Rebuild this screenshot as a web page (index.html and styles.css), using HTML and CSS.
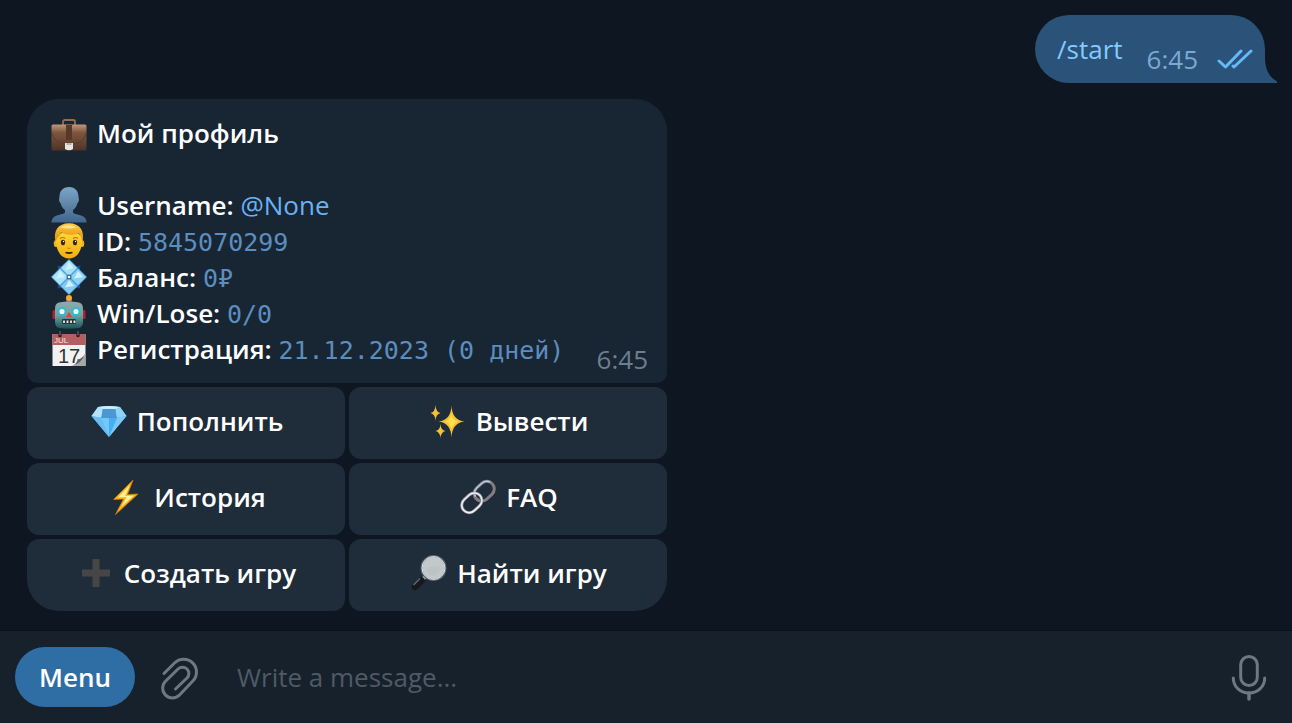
FILE: index.html
```html
<!DOCTYPE html>
<html lang="ru">
<head>
    <meta charset="utf-8">
    <meta name="viewport" content="width=device-width, initial-scale=1">
    <title>Мой профиль</title>
    <link rel="stylesheet" href="styles.css">
</head>
<body>
    <main class="chat">
        <div class="bubble out">
            <a class="command" href="#">/start</a>
            <span class="time">6:45</span>
            <svg class="checks" viewBox="0 0 36 20" aria-hidden="true">
                <path d="M2 12l6.500 6L24 2M16 17l1 1L34 2"/>
            </svg>
            <svg class="tail" viewBox="0 0 13 26" aria-hidden="true">
                <path d="M0 0H1C1 12 5 20 13 24.500V26H0z"/>
            </svg>
        </div>

        <section class="message">
            <div class="bubble in">
                <div class="profile">
                    <h1 class="row">
                        <svg class="icon" viewBox="0 0 36 36" aria-hidden="true">
                            <defs>
                                <linearGradient id="leather" x1="0" y1="0" x2="0" y2="1">
                                    <stop offset="0" stop-color="#c09a7c"/>
                                    <stop offset=".3" stop-color="#80573f"/>
                                    <stop offset="1" stop-color="#4f3327"/>
                                </linearGradient>
                            </defs>
                            <path d="M12 10V6.500q0-1.500 2-1.500h8q2 0 2 1.500v3.500" fill="none" stroke="#996b50" stroke-width="1.800"/>
                            <rect x="0.500" y="9.500" width="35" height="26" rx="1.500" fill="url(#leather)"/>
                            <path d="M1 18q2 10 13 11h8q11-1 13-11" fill="none" stroke="#5a3c2c" stroke-width="1"/>
                            <rect x="15" y="10" width="6" height="15" fill="#56392b"/>
                            <path d="M14 28h8v6q-4 2.500-8 0z" fill="#e6e6e6"/>
                            <path d="M15.500 28h5v2h-5z" fill="#b5b5b5"/>
                        </svg>
                        Мой профиль
                    </h1>
                    <ul class="facts">
                        <li class="row">
                            <svg class="icon" viewBox="0 0 36 36" aria-hidden="true">
                                <defs>
                                    <linearGradient id="bust" x1="0" y1="0" x2="0" y2="1">
                                        <stop offset="0" stop-color="#7ba6c6"/>
                                        <stop offset="1" stop-color="#41658c"/>
                                    </linearGradient>
                                </defs>
                                <path d="M18 0C11.500 0 8.500 4.500 8.500 9.500c0 1.500-.8 2.500-.3 4.500.4 1.500 1.200 1.500 1.500 2.500.6 3 2 5 4.300 6.500v2.500C13 28 3 27 1 32.500L.3 35.500h35.400L35 32.500C33 27 23 28 22 25.500V23c2.300-1.500 3.700-3.500 4.300-6.500.3-1 1.100-1 1.500-2.500.5-2-.3-3-.3-4.500C27.500 4.500 24.500 0 18 0z" fill="url(#bust)"/>
                            </svg>
                            <span>Username: <a class="mention" href="#">@None</a></span>
                        </li>
                        <li class="row">
                            <svg class="icon" viewBox="0 0 36 36" aria-hidden="true">
                                <defs>
                                    <linearGradient id="skin" x1="0" y1="0" x2="0" y2="1">
                                        <stop offset="0" stop-color="#ffd83b"/>
                                        <stop offset="1" stop-color="#f2ae0e"/>
                                    </linearGradient>
                                    <linearGradient id="hair" x1="0" y1="0" x2="0" y2="1">
                                        <stop offset="0" stop-color="#ffcb45"/>
                                        <stop offset="1" stop-color="#dd8a06"/>
                                    </linearGradient>
                                </defs>
                                <ellipse cx="4.800" cy="20.500" rx="2" ry="3.500" fill="#f4b51c"/>
                                <ellipse cx="31.200" cy="20.500" rx="2" ry="3.500" fill="#f4b51c"/>
                                <path d="M5 13Q18 4 31 13c1 13-4 22.500-13 22.500S4 26 5 13z" fill="url(#skin)"/>
                                <path d="M4.500 19C2 8 7 .3 18 .3S34 8 31.500 19L30 14q-.5-2-2-3.500-10 3-18-1-1 4-4 5.500z" fill="url(#hair)"/>
                                <path d="M9 4.500q9-5 17 0-8 2-17 0z" fill="#ffe38a"/>
                                <ellipse cx="12" cy="19.500" rx="2.100" ry="2.700" fill="#382315"/>
                                <ellipse cx="24" cy="19.500" rx="2.100" ry="2.700" fill="#382315"/>
                                <circle cx="12.500" cy="18.500" r=".7" fill="#fff"/>
                                <circle cx="24.500" cy="18.500" r=".7" fill="#fff"/>
                                <path d="M9 15.500q3-2 5 0M22 15.500q3-2 5 0" fill="none" stroke="#b97808" stroke-width="1.100"/>
                                <path d="M16.500 25q1.500 1 3 0" fill="none" stroke="#c47a08"/>
                                <path d="M14.500 29.500q3.500 1 7 0" fill="none" stroke="#392717" stroke-width="1.800"/>
                            </svg>
                            <span>ID: <code>5845070299</code></span>
                        </li>
                        <li class="row">
                            <svg class="icon" viewBox="0 0 36 36" aria-hidden="true">
                                <path d="M8 7l10 4 10-4 1 2-4 9 4 9-1 2-10-4-10 4-1-2 4-9-4-9z" fill="#2767b5"/>
                                <g fill="#174b91">
                                    <path d="M6.500 6.500l5 1-4 4zM29.500 6.500l-5 1 4 4zM6.500 29.500l5-1-4-4zM29.500 29.500l-5-1 4-4z"/>
                                </g>
                                <g stroke="#5aa9e0" stroke-width=".8">
                                    <path d="M18 .5l8.500 8.500-8.500 8.500L9.500 9z" fill="#a4e2fb"/>
                                    <path d="M27 9.500l8.500 8.500-8.500 8.500-8.500-8.500z" fill="#8bd3f8"/>
                                    <path d="M18 18.500l8.500 8.500-8.500 8.500L9.500 27z" fill="#82cbf5"/>
                                    <path d="M9 9.500l8.500 8.500L9 26.500.5 18z" fill="#a7e5fc"/>
                                </g>
                                <path d="M18 3l4.500 6-8.500 2zM27 12l5 6-9 1.500zM18 21l5 6-9 1.500zM9 12l5 6-9 1.500z" fill="#cff2fe"/>
                                <circle cx="18" cy="18" r="2.500" fill="#35608f"/>
                                <circle cx="18" cy="18" r="1.300" fill="#fff"/>
                            </svg>
                            <span>Баланс: <code>0₽</code></span>
                        </li>
                        <li class="row">
                            <svg class="icon" viewBox="0 0 36 36" aria-hidden="true">
                                <defs>
                                    <linearGradient id="steel" x1="0" y1="0" x2="0" y2="1">
                                        <stop offset="0" stop-color="#8faaac"/>
                                        <stop offset=".5" stop-color="#6aa5a4"/>
                                        <stop offset="1" stop-color="#1f5256"/>
                                    </linearGradient>
                                </defs>
                                <path d="M15 4h6v3.500h-6z" fill="#69539c"/>
                                <circle cx="18" cy="3" r="3" fill="#f9ac2b"/>
                                <rect x="1.500" y="15" width="4" height="9" rx="1.500" fill="#b3212b"/>
                                <rect x="30.500" y="15" width="4" height="9" rx="1.500" fill="#b3212b"/>
                                <path d="M8 7.500q10-2 20 0 4 1 4 6V26q0 6-4 7-10 1.500-20 0-4-1-4-7V13.500q0-5 4-6z" fill="url(#steel)"/>
                                <circle cx="11" cy="16.500" r="3.400" fill="#e9ffff" stroke="#36b6d4" stroke-width="1.700"/>
                                <circle cx="25" cy="16.500" r="3.400" fill="#e9ffff" stroke="#36b6d4" stroke-width="1.700"/>
                                <path d="M18 17l3 5h-6z" fill="#dc4537"/>
                                <rect x="11" y="24" width="14" height="5" rx="1" fill="#263638"/>
                                <path d="M13 25.500v2.500M16.500 25.500v2.500M20 25.500v2.500M23.500 25.500v2.500" stroke="#e9eeee" stroke-width="1.800"/>
                            </svg>
                            <span>Win/Lose: <code>0/0</code></span>
                        </li>
                        <li class="row">
                            <svg class="icon" viewBox="0 0 36 36" aria-hidden="true">
                                <path d="M1.500 3h33v32h-33z" fill="#f2f2f2"/>
                                <path d="M1.500 3h33v11h-33z" fill="#b35e60"/>
                                <path d="M34.500 22v13H20q7-1 8-7 5 0 6.500-6z" fill="#a8a8a8"/>
                                <path d="M34.500 22q-4 7-8 6 0 5-6 7 10-2 14-13z" fill="#5e5e5e"/>
                                <circle cx="9" cy="4.500" r="1.800" fill="#2a1c20"/>
                                <circle cx="27" cy="4.500" r="1.800" fill="#2a1c20"/>
                                <path d="M9 0v4.500M27 0v4.500" stroke="#54565a" stroke-width="1.500"/>
                                <text class="cal-month" x="3" y="12">JUL</text>
                                <text class="cal-day" x="18" y="32">17</text>
                            </svg>
                            <span>Регистрация: <code>21.12.2023 (0 дней)</code></span>
                        </li>
                    </ul>
                </div>
                <span class="time">6:45</span>
            </div>

            <div class="keyboard">
                <button type="button">
                    <svg class="icon" viewBox="0 0 36 36" aria-hidden="true">
                        <path d="M7 4q11-2 22 0l6.500 9L18 34 .5 13z" fill="#48aef0"/>
                        <path d="M7 4l4.500 1L11 15 .5 13z" fill="#b2e3fb"/>
                        <path d="M29 4l-4.500 1 .5 10 10.500-2z" fill="#90d2f8"/>
                        <path d="M12 6h12l2 9H10z" fill="#4a97d3"/>
                        <path d="M7 4q11-2 22 0l-5 2H12z" fill="#c7effd"/>
                        <path d="M.5 13L10 15l8 19z" fill="#68bdf3"/>
                        <path d="M35.500 13L26 15l-8 19z" fill="#7cc9f8"/>
                        <path d="M10 15h8v19z" fill="#72c8fa"/>
                    </svg>
                    Пополнить
                </button>
                <button type="button">
                    <svg class="icon" viewBox="0 0 36 36" aria-hidden="true">
                        <g fill="#f7c136">
                            <path d="M21.500 2.500Q22 17 34.500 18.500 22 20 21.500 34.500 21 20 8.500 18.500 21 17 21.500 2.500z"/>
                            <path d="M5.500 2q.3 7 5 8-4.700 1-5 8-.3-7-5-8 4.700-1 5-8z"/>
                            <path d="M10.500 21q.3 6 5 7-4.700 1-5 7.500-.3-6.500-5-7.500 4.700-1 5-7z"/>
                        </g>
                        <path d="M21.500 11q1.500 6 6 7.500-4.500 1.500-6 7.500-1.500-6-6-7.500 4.500-1.500 6-7.500z" fill="#ffe04a"/>
                    </svg>
                    Вывести
                </button>
                <button type="button">
                    <svg class="icon" viewBox="0 0 36 36" aria-hidden="true">
                        <path d="M25 1L5.500 20.500l10-.5L7.500 35.500 30 15l-10.500.5z" fill="#ffb714" stroke="#c77907" stroke-width=".8"/>
                        <path d="M22 6L10 18.500l8.500-.5-5 9.500L26 16.500l-9 .5z" fill="#fff1a0"/>
                    </svg>
                    История
                </button>
                <button type="button">
                    <svg class="icon" viewBox="0 0 36 36" aria-hidden="true">
                        <g fill="none" transform="rotate(-43 18 18)">
                            <rect x="15.500" y="10.500" width="22" height="15" rx="7.500" stroke="#857c81" stroke-width="3"/>
                            <path d="M16.500 16q1-5.500 7-5.500h6q6 0 7.500 5" stroke="#b3cbe8" stroke-width="1.400"/>
                            <rect x="-1.500" y="10.500" width="22" height="15" rx="7.500" stroke="#96939b" stroke-width="3"/>
                            <rect x="-1.500" y="10.500" width="22" height="15" rx="7.500" stroke="#eef2f8" stroke-width="1.500"/>
                            <path d="M15.500 17.500q0 3 2 5.500" stroke="#857c81" stroke-width="3"/>
                        </g>
                    </svg>
                    FAQ
                </button>
                <button type="button">
                    <svg class="icon" viewBox="0 0 36 36" aria-hidden="true">
                        <path d="M14.500 4h7v10.500H32v7H21.500V32h-7V21.500H4v-7h10.500z" fill="#464646"/>
                    </svg>
                    Создать игру
                </button>
                <button type="button">
                    <svg class="icon" viewBox="0 0 36 36" aria-hidden="true">
                        <path d="M14.500 21.500l-4 4" stroke="#a9adaf" stroke-width="3.500"/>
                        <path d="M10.500 25.500L4 32" stroke="#17181a" stroke-width="6.500" stroke-linecap="round"/>
                        <path d="M9 23.500l-6.500 6.500" stroke="#66696d" stroke-width="1.500"/>
                        <circle cx="22.500" cy="13" r="12" fill="#c3c8cb" stroke="#5d6670" stroke-width="2"/>
                        <circle cx="22.500" cy="13" r="11.500" fill="none" stroke="#dce5ec"/>
                        <path d="M15 14q7-5 15-1-2 7-7.500 7.500T15 14z" fill="#bcc2c6"/>
                    </svg>
                    Найти игру
                </button>
            </div>
        </section>
    </main>

    <form class="composer">
        <button type="button" class="menu">Menu</button>
        <button type="button" class="tool" aria-label="Attach">
            <svg width="36" height="46" viewBox="0 0 36 46" aria-hidden="true">
                <path d="M2 19.500L12.500 9A12.700 12.700 0 0 1 30.800 27L17.500 41A9.700 9.700 0 0 1 3.500 27.200L16 15A6.300 6.300 0 0 1 25 24L13.500 35"/>
            </svg>
        </button>
        <input type="text" class="field" placeholder="Write a message..." aria-label="Write a message">
        <button type="button" class="tool" aria-label="Voice message">
            <svg width="36" height="46" viewBox="0 0 36 46" aria-hidden="true">
                <rect x="9.700" y="2.500" width="16.600" height="29" rx="8.300"/>
                <path d="M2.300 24C2.300 32.500 9 39 18 39S33.700 32.500 33.700 24"/>
                <path d="M18 39v6" stroke-width="3.500"/>
            </svg>
        </button>
    </form>
</body>
</html>
```
FILE: styles.css
```css
* {
    box-sizing: border-box;
}

body {
    display: flex;
    flex-direction: column;
    min-height: 100vh;
    margin: 0;
    background: #0e1621;
    color: #fff;
    font-family: "Open Sans", "Noto Sans", sans-serif;
    font-size: 26px;
    line-height: 36px;
}

button,
input {
    padding: 0;
    border: 0;
    background: none;
    color: inherit;
    font: inherit;
}

button {
    cursor: pointer;
}

a {
    text-decoration: none;
}

/* messages */
.chat {
    display: flex;
    flex: 1;
    flex-direction: column;
    justify-content: flex-end;
    gap: 16px;
    padding: 15px 27px 19px;
}

.bubble {
    display: flex;
    padding: 16px 19px 6px 24px;
}

.time {
    align-self: flex-end;
    margin-left: auto;
    color: #6d7f8f;
}

.out {
    position: relative;
    align-self: flex-end;
    padding-right: 12px;
    padding-left: 22px;
    border-radius: 34px 34px 0 34px;
    background: #2b5278;
}

.out .time {
    margin-left: 24px;
    color: #7da8d3;
}

.command {
    margin-bottom: 10px;
    color: #83caff;
}

.checks {
    align-self: flex-end;
    width: 36px;
    height: 20px;
    margin: 0 0 8px 19px;
    fill: none;
    stroke: #65b9f9;
    stroke-width: 3;
    stroke-linecap: round;
    stroke-linejoin: round;
}

.tail {
    position: absolute;
    right: -12px;
    bottom: 0;
    width: 13px;
    height: 26px;
    fill: #2b5278;
}

.message {
    display: flex;
    flex-direction: column;
    gap: 4px;
    width: 100%;
    max-width: 640px;
}

.in {
    border-radius: 32px 32px 10px 10px;
    background: #182533;
}

.profile {
    margin-bottom: 10px;
}

.row {
    display: flex;
    gap: 10px;
    margin: 0;
    font-size: 26px;
    font-weight: 600;
}

.facts {
    margin: 36px 0 0;
    padding: 0;
    list-style: none;
}

.icon {
    flex: none;
    width: 36px;
    height: 36px;
}

.mention {
    color: #6ab3f3;
    font-weight: 400;
}

code {
    color: #5b8ebf;
    font-family: "DejaVu Sans Mono", monospace;
    font-size: 25px;
    font-weight: 400;
    line-height: 1;
}

.cal-month,
.cal-day {
    font-family: "Liberation Sans", sans-serif;
    font-weight: 400;
}

.cal-month {
    fill: #f4e4e4;
    font-size: 8px;
}

.cal-day {
    fill: #333;
    font-size: 20px;
    text-anchor: middle;
}

/* inline keyboard */
.keyboard {
    display: grid;
    grid-template-columns: 1fr 1fr;
    gap: 4px;
}

.keyboard button {
    display: flex;
    align-items: center;
    justify-content: center;
    gap: 10px;
    height: 72px;
    padding: 0 0 4px 2px;
    border-radius: 12px;
    background: #1f2c39;
    font-weight: 600;
}

.keyboard button:nth-last-child(2) {
    border-bottom-left-radius: 32px;
}

.keyboard button:last-child {
    border-bottom-right-radius: 32px;
}

/* bottom bar */
.composer {
    display: flex;
    align-items: center;
    padding: 16px 25px 16px 15px;
    border-top: 1px solid #0a111b;
    background: #17212b;
}

.menu {
    width: 120px;
    height: 60px;
    margin-right: 27px;
    border-radius: 30px;
    background: #2f6ea5;
    font-weight: 600;
}

.tool svg {
    display: block;
    overflow: visible;
    fill: none;
    stroke: #6c7883;
    stroke-width: 3;
    stroke-linecap: round;
}

.field {
    flex: 1;
    min-width: 0;
    margin: 0 24px 0 39px;
    outline: none;
}

.field::placeholder {
    color: #4e5a66;
    opacity: 1;
}
```
